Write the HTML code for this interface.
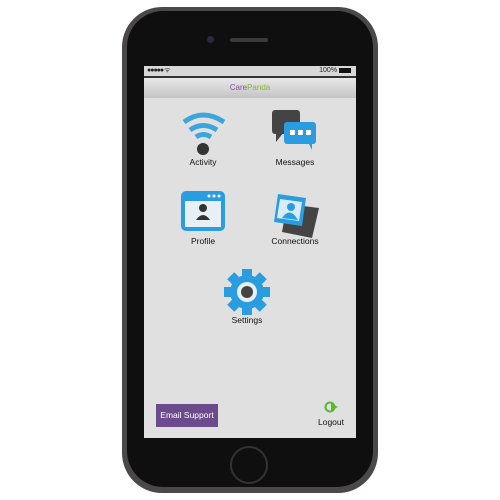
<!DOCTYPE html>
<html><head><style>
body{margin:0;width:500px;height:500px;background:#fff;position:relative;overflow:hidden;font-family:"Liberation Sans",sans-serif}
.case{position:absolute;left:122px;top:7px;width:256px;height:486px;border-radius:40px;background:#4a4848}
.inner{position:absolute;left:127px;top:11px;width:246px;height:476px;border-radius:36px;background:#0f0f0f}
.screen{position:absolute;left:144px;top:66px;width:212px;height:372px;background:#e0e0e0;overflow:hidden}
.status{height:10px;background:#d8d8d8;border-bottom:2px solid #333;font-size:7px;line-height:10px;color:#222;position:relative}
.hdr{height:20px;background:linear-gradient(#e8e8e8,#c4c4c4);text-align:center;font-size:8px;line-height:20px}
.lbl{position:absolute;font-size:8.5px;color:#111;text-align:center;width:80px}
.btn{position:absolute;left:12px;top:338px;width:62px;height:23px;background:#6b4b8c;color:#fff;font-size:8.5px;line-height:23px;text-align:center}
</style></head><body>
<div class="case"></div><div class="inner"></div>
<div style="position:absolute;left:207px;top:36px;width:7px;height:7px;border-radius:50%;background:#2a2a3a"></div>
<div style="position:absolute;left:230px;top:38px;width:38px;height:4px;border-radius:2px;background:#3a3a3a"></div>
<div style="position:absolute;left:230px;top:446px;width:38px;height:38px;border-radius:50%;border:2px solid #333;box-sizing:border-box"></div>
<div class="screen">
<div class="status"><span style="position:absolute;left:3px;letter-spacing:-1px">●●●●● ᯤ</span><span style="position:absolute;right:5px">100% <span style="display:inline-block;width:12px;height:5px;background:#111;vertical-align:middle"></span></span></div>
<div class="hdr"><span style="color:#7b55a0">Care</span><span style="color:#8bb33a">Panda</span></div>
<svg style="position:absolute;left:0;top:0" width="212" height="372">
<g fill="none" stroke="#3aa6e0" stroke-width="5">
<path d="M40 56 Q59 42 80 56"/><path d="M46 64 Q59 55 73 64"/><path d="M52 71 Q59 66 67 71"/></g>
<circle cx="59" cy="83" r="6" fill="#333"/>
<rect x="128" y="44" width="28" height="24" rx="3" fill="#444"/><path d="M132 66 L132 76 L140 66Z" fill="#444"/>
<rect x="140" y="56" width="32" height="22" rx="3" fill="#2a9de0"/><path d="M164 76 L168 84 L168 76Z" fill="#2a9de0"/>
<rect x="146" y="64" width="5" height="5" fill="#fff"/><rect x="154" y="64" width="5" height="5" fill="#fff"/><rect x="162" y="64" width="5" height="5" fill="#fff"/>
<rect x="37" y="125" width="44" height="40" rx="5" fill="#2a9de0"/><rect x="41" y="135" width="36" height="26" fill="#e8f0f6"/>
<circle cx="65" cy="130" r="1.5" fill="#fff"/><circle cx="70" cy="130" r="1.5" fill="#fff"/><circle cx="75" cy="130" r="1.5" fill="#fff"/>
<circle cx="59" cy="142" r="4" fill="#333"/><path d="M52 154 Q59 144 66 154Z" fill="#333"/>
<path d="M143 138 L175 142 L168 172 L138 166Z" fill="#444"/>
<path d="M134 128 L162 132 L158 160 L130 156Z" fill="#2a9de0"/><path d="M136 133 L158 136 L155 155 L133 152Z" fill="#d8ecf8"/>
<circle cx="147" cy="141" r="4" fill="#2a9de0"/><path d="M138 152 Q146 140 154 154Z" fill="#2a9de0"/>
<g fill="#2a9de0" transform="translate(103,226)">
<circle r="17"/>
<rect x="-5" y="-23" width="10" height="46"/>
<rect x="-5" y="-23" width="10" height="46" transform="rotate(45)"/><rect x="-5" y="-23" width="10" height="46" transform="rotate(90)"/><rect x="-5" y="-23" width="10" height="46" transform="rotate(135)"/>
<circle r="10" fill="#e8eef2"/><circle r="6" fill="#444"/></g>
<circle cx="186" cy="341" r="4.5" fill="none" stroke="#5cb82e" stroke-width="2"/><path d="M187 337.5 L194 341 L187 344.5Z" fill="#5cb82e"/>
</svg>
<div class="lbl" style="left:19px;top:91px">Activity</div>
<div class="lbl" style="left:111px;top:91px">Messages</div>
<div class="lbl" style="left:19px;top:170px">Profile</div>
<div class="lbl" style="left:111px;top:170px">Connections</div>
<div class="lbl" style="left:63px;top:249px">Settings</div>
<div class="btn">Email Support</div>
<div class="lbl" style="left:147px;top:351px">Logout</div>
</div>
</body></html>
